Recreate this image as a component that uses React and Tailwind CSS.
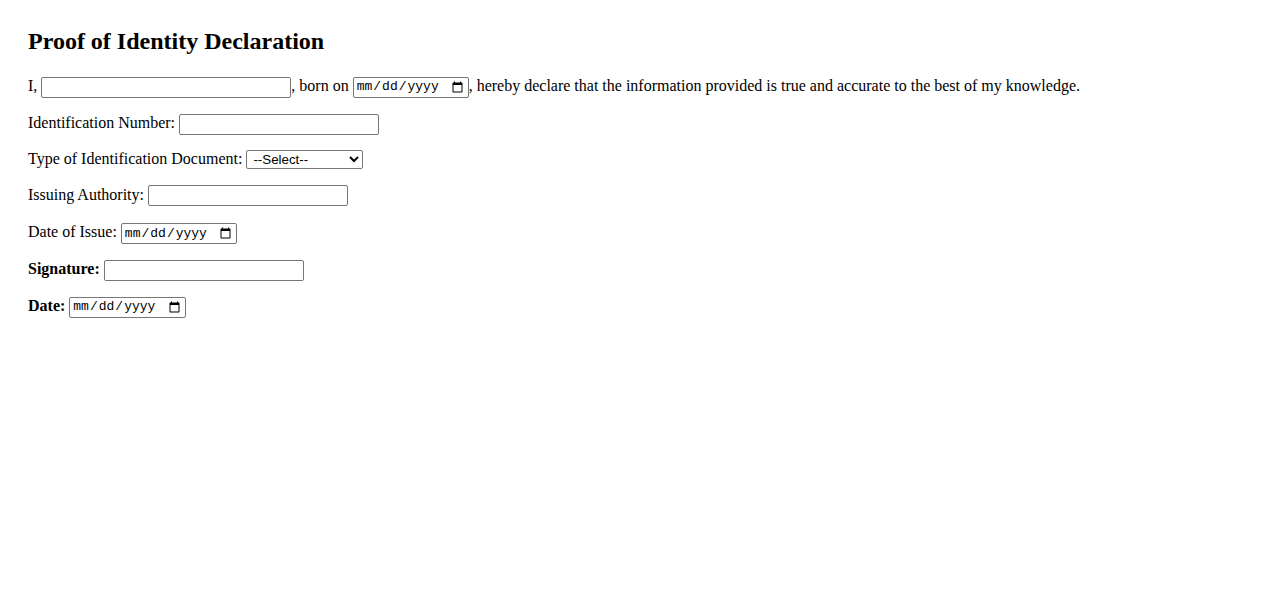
export default function App() {
  const txt = "h-[21px] border border-[#767676] rounded-[2px] px-[2px] py-[1px] bg-white align-middle text-[13.33px] font-['Arial',sans-serif]";
  const date = "h-[21px] w-[116px] border border-[#767676] rounded-[2px] px-[2px] py-[1px] bg-white align-middle text-[13px] font-['Liberation_Mono',monospace]";
  return (
    <div className="min-h-[601px] bg-white text-black font-['Liberation_Serif','Times_New_Roman',serif] text-[16px] pl-[28px] pt-[28px]">
      <h2 className="text-[24px] font-bold leading-[27px]">Proof of Identity Declaration</h2>
      <div className="mt-[20px] leading-[22px]">
        I, <input type="text" className={txt + " w-[250px]"} />, born on <input type="date" className={date} />, hereby declare that the information provided is true and accurate to the best of my knowledge.
      </div>
      <div className="mt-[14px] leading-[22px]">
        Identification Number: <input type="text" className={txt + " w-[200px]"} />
      </div>
      <div className="mt-[13px] leading-[22px]">
        Type of Identification Document:{" "}
        <select className="h-[19px] w-[117px] border border-[#767676] rounded-[2px] bg-white align-middle text-[13.33px] font-['Arial',sans-serif] pl-[2px]">
          <option>--Select--</option>
          <option>Passport</option>
          <option>Driver's License</option>
          <option>National ID Card</option>
        </select>
      </div>
      <div className="mt-[14px] leading-[22px]">
        Issuing Authority: <input type="text" className={txt + " w-[200px]"} />
      </div>
      <div className="mt-[15px] leading-[22px]">
        Date of Issue: <input type="date" className={date} />
      </div>
      <div className="mt-[14px] leading-[22px]">
        <b>Signature:</b> <input type="text" className={txt + " w-[200px]"} />
      </div>
      <div className="mt-[14px] leading-[22px]">
        <b>Date:</b> <input type="date" className={date + " !w-[117px]"} />
      </div>
    </div>
  );
}
